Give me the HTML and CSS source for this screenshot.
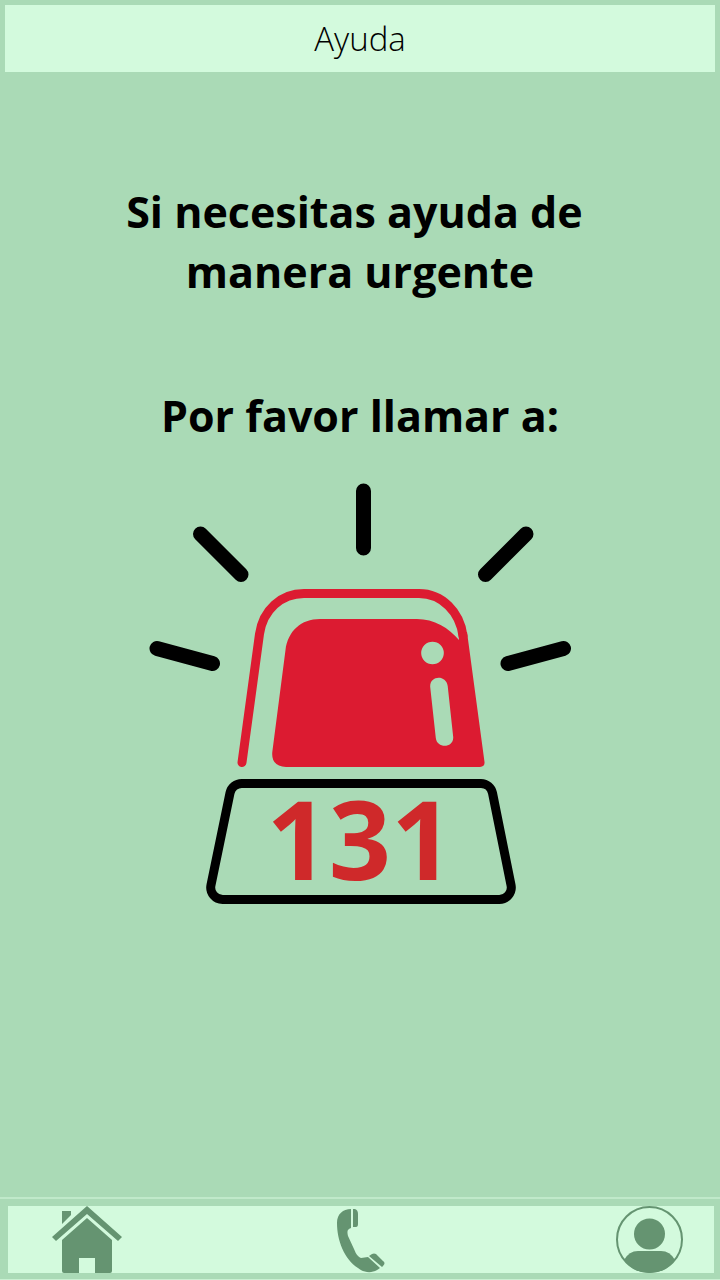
FILE: index.html
```html
<!DOCTYPE html>
<html lang="es">
<head>
<meta charset="utf-8">
<meta name="viewport" content="width=device-width, initial-scale=1">
<title>Ayuda</title>
<link rel="stylesheet" href="styles.css">
</head>
<body>
<header class="topbar">
  <h1 class="topbar-title">Ayuda</h1>
</header>
<main class="content">
  <p class="message">Si necesitas ayuda de&nbsp;<br>manera urgente</p>
  <p class="message">Por favor llamar a:</p>
  <a class="emergency" href="tel:131">
    <svg class="siren" viewBox="149 483 422 422">
      <g class="rays">
        <path d="M363.500 491v57M200.500 534l40.500 40.500M526 534l-40.500 40.500M157 648.500l55.500 15M563.500 648.500l-55.500 15"/>
      </g>
      <path class="shell" d="M242 762.500L259.500 634C263 610 281 593.500 304 593.500H419C442 593.500 460 612 463 636"/>
      <path class="lamp" fill-rule="evenodd" d="M320 619H417C434 619 449 628 459 640L458.500 634L467 632L484.500 762Q485 767 480 767H286Q271 766 272.300 752L285.500 650C288 631 301 619 320 619ZM432.500 641.700a11.300 11.300 0 1 0 0 22.600a11.300 11.300 0 1 0 0-22.600ZM430.200 687L435.800 738C437 749 454 748 453.200 737L447.700 686C446 674.500 429.500 675.500 430.200 687Z"/>
      <path class="base" d="M242 783.500H481A12 12 0 0 1 492.500 793L511 885A12 12 0 0 1 499 899.500H223A12 12 0 0 1 211 885L230 793A12 12 0 0 1 242 783.500Z"/>
      <text class="number" x="360" y="880">131</text>
    </svg>
  </a>
</main>
<footer class="bottom">
  <nav class="tabs" aria-label="Principal">
    <a class="tab" href="#inicio" aria-label="Inicio">
      <svg class="tab-icon" viewBox="0 0 72 67">
        <path d="M11 5h9v4l-9 9zM36 0L71 31l-4 4L36 8L5 35L1 31ZM36 12L61 34v31q0 2-2 2H44V52H28v15H13q-2 0-2-2V34Z"/>
      </svg>
    </a>
    <a class="tab" href="tel:131" aria-label="Llamar">
      <svg class="tab-icon" viewBox="-5 0 72 67">
        <path d="M14 3v19C10 23 10 26 11 30L17 43Q20 51 24 52L31 51L43 62C36 68 27 67 21 62C7 53 0 34 0 17C0 8 6 3 14 3ZM16 3h2q3 1 3 5v10q0 3-2 3h-3zM32 50l3-2q2-1 4 0l7 7q3 2 0 5l-1 1Z"/>
      </svg>
    </a>
    <a class="tab" href="#perfil" aria-label="Perfil">
      <svg class="tab-icon" viewBox="0 0 72 67">
        <circle class="ring" cx="36.500" cy="33.500" r="32.500"/>
        <circle cx="36.500" cy="28" r="15.500"/>
        <path d="M11 54Q16 45 25 45H48Q57 45 62 54Q52 67 36.500 67T11 54Z"/>
      </svg>
    </a>
  </nav>
</footer>
</body>
</html>
```
FILE: styles.css
```css
* {
  box-sizing: border-box;
}

body {
  margin: 0;
  min-height: 100vh;
  display: flex;
  flex-direction: column;
  background: #aadab6;
  color: #000;
  font-family: "Open Sans", "Noto Sans", sans-serif;
}

.topbar {
  margin: 5px 5px 0;
  padding: 10px;
  background: #d3fadd;
  text-align: center;
}

.topbar-title {
  margin: 0;
  font-size: 33px;
  font-weight: 300;
  line-height: 47px;
}

.content {
  flex: 1;
  display: flex;
  flex-direction: column;
  align-items: center;
  padding: 110px 16px 32px;
}

.message {
  margin: 0 0 84px;
  font-size: 43px;
  font-weight: 700;
  line-height: 60px;
  text-align: center;
}

.message + .message {
  margin-bottom: 37px;
}

.emergency {
  width: 422px;
  max-width: 100%;
}

.siren {
  display: block;
  width: 100%;
  height: auto;
  overflow: visible;
}

.rays {
  fill: none;
  stroke: #000;
  stroke-width: 15px;
  stroke-linecap: round;
}

.shell {
  fill: none;
  stroke: #dc1b31;
  stroke-width: 9px;
  stroke-linecap: round;
}

.lamp {
  fill: #dc1b31;
}

.base {
  fill: none;
  stroke: #000;
  stroke-width: 9px;
}

.number {
  fill: #cf292a;
  font-size: 109px;
  font-weight: 700;
  text-anchor: middle;
}

.bottom {
  padding: 7px 6px 6px 8px;
  border-top: 2px solid #c0e9ca;
  border-bottom: 1px solid #c9f0d2;
}

.tabs {
  display: flex;
  justify-content: space-between;
  padding: 0 29px 0 43px;
  background: #d3fadd;
}

.tab {
  display: block;
  color: #659471;
}

.tab-icon {
  display: block;
  width: 72px;
  height: 67px;
  fill: currentColor;
}

.ring {
  fill: none;
  stroke: currentColor;
  stroke-width: 2px;
}
```
